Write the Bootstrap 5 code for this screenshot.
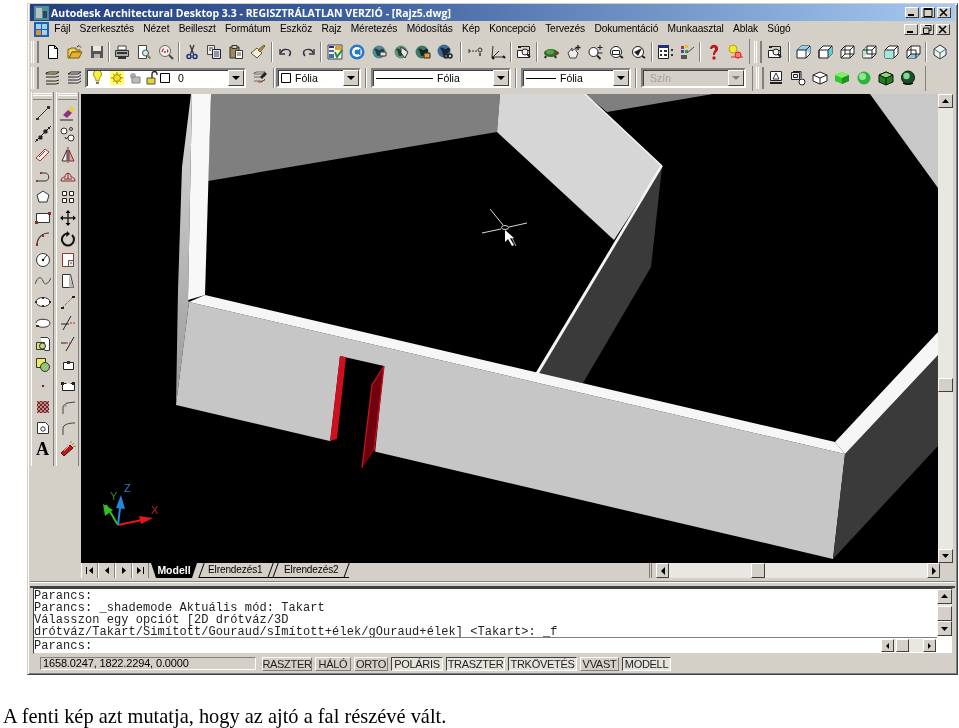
<!DOCTYPE html>
<html lang="hu">
<head>
<meta charset="utf-8">
<title>Autodesk Architectural Desktop</title>
<link href="https://cdn.jsdelivr.net/npm/bootstrap@5.3.0/dist/css/bootstrap.min.css" rel="stylesheet">
<style>
html,body{height:728px;overflow:hidden;background:#fff;margin:0}
body{font-family:"Liberation Sans",Arial,sans-serif;font-size:10px;color:#000;line-height:1}
.win{margin:3px 0 0 27px;width:931px;height:672px;background:#d4d0c8;border:1px solid;border-color:#d4d0c8 #404040 #404040 #d4d0c8;box-shadow:inset 1px 1px 0 #fff,inset -1px -1px 0 #808080;filter:blur(.3px)}
.ttl{height:17px;margin:0 2px 0 2px;background:linear-gradient(90deg,#24407f 0,#3d5f9f 35%,#a6caf0 100%);color:#fff;font:bold 10.5px "Open Sans","DejaVu Sans",sans-serif;padding-left:4px;gap:2px}
.wbtn{width:14px;height:11px;background:#d4d0c8;border:1px solid;border-color:#fff #404040 #404040 #fff;margin-left:1px}
.wbtn svg{display:block;margin:0 auto}
.wctl{margin-left:auto;padding-right:4px;gap:1px}
.mnu{height:17px;padding:0 3px 0 6px}
.mnu .mi{padding:0 4.65px;white-space:nowrap;letter-spacing:-.1px;font-size:10.2px}
.mnu .mi:first-of-type{padding-left:5.3px}
.tbrow{height:26px}
.tb1{height:27px}
.grip{width:7px;height:22px;flex:none;margin:0 2px 0 3px;border-left:3px double #fff;border-right:1px solid #808080;box-shadow:1px 0 0 #808080}
.grip.g1{margin-right:4px}
.grip.g2{margin:0 3px 0 4px}
.bt{width:22px;height:22px;flex:none}
.bt svg{display:block;width:16px;height:16px}
.sp{height:20px;width:0;border-left:1px solid #808080;border-right:1px solid #fff;flex:none}
.s3{margin:0 1px}.s5{margin:0 2px 0 1px}.s6{margin:0 2px}.s7{margin:0 1px 0 0}.s9{margin:0 3px 0 4px}
.endb{border-right:1px solid #808080;height:25px;width:3px;flex:none}
.cmb{height:20px;background:#fff;border:2px solid;border-color:#808080 #fff #fff #808080;box-shadow:inset 1px 1px 0 #404040;flex:none;padding-left:3px;font-size:10.5px}
.cmb.off{background:#d4d0c8;color:#a0a0a0}
.arw{margin-left:auto;width:16px;height:16px;background:#d4d0c8;border:1px solid;border-color:#fff #404040 #404040 #fff;flex:none}
.line-s{border-top:1px solid #000;flex:none}
.side{width:53px;flex:none;padding:1px 0 0 3px;gap:2px}
.scol{width:23px;border-left:1px solid #fff;border-right:1px solid #808080;height:374px}
.hgrip{height:7px;margin:1px 1px 2px;border-top:3px double #fff;border-bottom:1px solid #808080}
.sb{height:21px;width:100%}
.sb svg{width:16px;height:16px;display:block}
.view{height:472px}
.vp{width:857px;height:469px;display:block;background:#000;margin-top:3px}
.vsc{width:15px;height:469px;margin-top:3px;background:#e9e7e1}
.sbtn{background:#d4d0c8;border:1px solid;border-color:#fff #404040 #404040 #fff;flex:none}
.sbtn svg{display:block;margin:auto}
.sv{width:15px;height:14px}
.vth{height:14px;width:15px;margin-top:270px;margin-bottom:auto}
.tabs{height:17px;padding-left:53px}
.nv{width:17px;height:15px;flex:none;border-right:1px solid #808080;border-left:1px solid #fff}
.tb-a{width:46px;height:15px;background:#000;color:#fff;font-weight:bold;font-size:10.5px;clip-path:polygon(0 0,100% 0,calc(100% - 5px) 100%,5px 100%);flex:none;margin-left:2px}
.tb-n{height:15px;flex:none;position:relative;border-bottom:1px solid #000;font-size:10px;letter-spacing:-.1px}
.e1{width:74px;padding-left:9px;margin-left:2px}
.e2{width:76px;padding-left:11px}
.tb-n::after{content:"";position:absolute;right:2px;top:0;height:15px;border-right:1px solid #000;transform:skewX(-20deg)}
.tb-n::before{content:"";position:absolute;left:2px;top:0;height:15px;border-left:1px solid #000;transform:skewX(-20deg)}
.hsc{margin-left:auto;margin-right:17px;width:291px;gap:0;height:15px}
.hgr{width:7px;height:15px;border-left:3px double #808080;flex:none}
.hbt{width:13px;height:15px}
.htr{background:#e9e7e1;height:15px;flex-grow:1}
.hth{width:14px;height:15px;margin-left:82px}
.dsep{height:7px;margin:1px 2px 0;border-top:1px solid #808080;border-bottom:2px solid #404040;box-shadow:inset 0 1px 0 #fff}
.cmd{height:66px;margin:0 4px 0 5px;background:#fff;border:1px solid;border-color:#404040 #d4d0c8 #d4d0c8 #404040}
.cmtx{font:12px/12px "Liberation Mono","Courier New",monospace;white-space:pre;color:#222;letter-spacing:.07px}
.cml{height:49px;border-bottom:1px solid #808080;overflow:hidden;padding-top:1px}
.cl2{height:15px;padding-top:2px}
.cr{width:15px;background:#e9e7e1;height:47px;flex:none}
.cra{height:15px}
.chb{height:13px;width:55px;margin:1px 1px 0 auto;background:#e9e7e1;gap:2px}
.chb .sbtn{width:13px;height:13px}
.st{height:19px;padding:3px 0 0 12px}
.coo{width:216px;height:13px;border:1px solid;border-color:#808080 #fff #fff #808080;padding-left:2px;margin-right:6px;font-size:11px;letter-spacing:-.15px}
.sk{height:14px;flex:none;font-size:11px;border:1px solid;border-color:#fff #808080 #808080 #fff;margin-right:3px;letter-spacing:-.3px;color:#222}
.sk.dn{border-color:#404040 #fff #fff #404040;background:#e6e3dc}
.cap{font:20.4px/24px "Liberation Serif","Times New Roman",serif;margin:29px 0 0 3px;color:#000;white-space:nowrap;filter:blur(.25px)}
.cmb1{width:161px;margin-left:-1px}.cmb2{width:85px}.cmb3{width:140px}.cmb4{width:110px}.cmb5{width:105px}
.ln1{width:57px}.ln2{width:30px}
.fa-a{font:bold 18px/1 "Liberation Serif",serif}
.k1{width:50px}.k2{width:36px}.k3{width:34px}.k4{width:52px}.k5{width:59px}.k6{width:69px}.k7{width:39px}.k8{width:49px}
.flex-none{flex:none}
</style>
</head>
<body>
<div class="win d-flex flex-column">
  <div class="ttl d-flex align-items-center">
    <svg width="15" height="14" viewBox="0 0 15 14"><rect width="15" height="14" fill="#4f8f98"/><path d="M2 2h6v10H2z" fill="#b8c4c8"/><path d="M9 5h4v7H9z" fill="#28486a"/></svg>
    <span>Autodesk Architectural Desktop 3.3 - REGISZTRÁLATLAN VERZIÓ - [Rajz5.dwg]</span>
    <div class="wctl d-flex">
      <div class="wbtn"><svg width="12" height="9"><path d="M2 6h6v2H2z"/></svg></div>
      <div class="wbtn"><svg width="12" height="9"><path d="M2 .5h8v8H2z" fill="none" stroke="#000"/><path d="M2 1h8v1H2z"/></svg></div>
      <div class="wbtn"><svg width="12" height="9"><path d="M2 1l7 7M9 1L2 8" stroke="#000" stroke-width="1.5"/></svg></div>
    </div>
  </div>
  <div class="mnu d-flex align-items-center">
    <svg width="15" height="15" viewBox="0 0 15 15" class="flex-none"><rect width="15" height="15" fill="#1f5fb8"/><path d="M2 2h5v5H2zM8 2h5v5H8zM8 8h5v5H8z" fill="#9fd0f5"/><path d="M2 8h5v5H2z" fill="#e89020"/></svg>
    <span class="mi">Fájl</span><span class="mi">Szerkesztés</span><span class="mi">Nézet</span><span class="mi">Beilleszt</span><span class="mi">Formátum</span><span class="mi">Eszköz</span><span class="mi">Rajz</span><span class="mi">Méretezés</span><span class="mi">Módosítás</span><span class="mi">Kép</span><span class="mi">Koncepció</span><span class="mi">Tervezés</span><span class="mi">Dokumentáció</span><span class="mi">Munkaasztal</span><span class="mi">Ablak</span><span class="mi">Súgó</span>
    <div class="wctl d-flex">
      <div class="wbtn"><svg width="12" height="9"><path d="M2 6h6v2H2z"/></svg></div>
      <div class="wbtn"><svg width="12" height="9"><path d="M4 .5h6v5H8M2.500 3h5.500v5.500H2.500z" fill="none" stroke="#000"/></svg></div>
      <div class="wbtn"><svg width="12" height="9"><path d="M2 1l7 7M9 1L2 8" stroke="#000" stroke-width="1.500"/></svg></div>
    </div>
  </div>

  <div class="tbrow tb1 d-flex align-items-center">
    <div class="grip g1"></div>
    <div class="bt d-flex align-items-center justify-content-center"><svg viewBox="0 0 16 16"><path d="M3.500 1.500h6l3 3v10h-9z" fill="#fff" stroke="#000"/><path d="M9.500 1.500v3h3" fill="none" stroke="#000"/></svg></div>
    <div class="bt d-flex align-items-center justify-content-center"><svg viewBox="0 0 16 16"><path d="M1 14V5h2l1-1h5v2h4v2H5l-3 6z" fill="#f0d060" stroke="#806000"/><path d="M2 14l3-6h10l-3 6z" fill="#e8b030" stroke="#806000"/><path d="M10 3l2-1.500 2 2" fill="none" stroke="#333"/></svg></div>
    <div class="bt d-flex align-items-center justify-content-center"><svg viewBox="0 0 16 16"><path d="M2 2h12v12H2z" fill="#555"/><path d="M4 2h8v5H4z" fill="#e8e8e0"/><path d="M5 10h6v4H5z" fill="#b8b8b0"/></svg></div>
    <div class="sp s7"></div>
    <div class="bt d-flex align-items-center justify-content-center"><svg viewBox="0 0 16 16"><path d="M4 2h8v4H4z" fill="#fff" stroke="#444"/><path d="M1.500 6.500h13v6h-13z" fill="#aaa" stroke="#333"/><path d="M3 9h10M4 14h8" stroke="#333" stroke-width="2"/></svg></div>
    <div class="bt d-flex align-items-center justify-content-center"><svg viewBox="0 0 16 16"><path d="M2.500 1.500h8v13h-8z" fill="#fff" stroke="#444"/><circle cx="9.500" cy="9" r="3" fill="#cfe8f0" stroke="#355"/><path d="M11.500 11.500l3 3" stroke="#a07030" stroke-width="2"/></svg></div>
    <div class="bt d-flex align-items-center justify-content-center"><svg viewBox="0 0 16 16"><circle cx="7" cy="7" r="5.500" fill="#f5eeee" stroke="#666"/><path d="M4 8c1-3 1-3 2-3M6 8h2M9 6c1 0 1 2 0 2" fill="none" stroke="#b03030" stroke-width="1.300"/><path d="M11 11l4 4" stroke="#444" stroke-width="2"/></svg></div>
    <div class="sp s3"></div>
    <div class="bt d-flex align-items-center justify-content-center"><svg viewBox="0 0 16 16"><path d="M6 1l3.500 9M10 1L6.500 10" stroke="#333" stroke-width="1.300" fill="none"/><circle cx="5" cy="12.500" r="2" fill="none" stroke="#203080" stroke-width="1.500"/><circle cx="11" cy="12.500" r="2" fill="none" stroke="#203080" stroke-width="1.500"/></svg></div>
    <div class="bt d-flex align-items-center justify-content-center"><svg viewBox="0 0 16 16"><path d="M1.500 1.500h7v9h-7z" fill="#eee" stroke="#444"/><path d="M6.500 5.500h8v9h-8z" fill="#e0e4f0" stroke="#223"/><path d="M8 8h5M8 10h5M8 12h5M3 4h4M3 6h2" stroke="#445"/></svg></div>
    <div class="bt d-flex align-items-center justify-content-center"><svg viewBox="0 0 16 16"><path d="M2 3h9v11H2z" fill="#a08860" stroke="#332"/><path d="M4 1.500h5v3H4z" fill="#ccc" stroke="#333"/><path d="M7.500 6.500h7v8h-7z" fill="#fff" stroke="#333"/><path d="M9 9h4M9 11h4" stroke="#555"/></svg></div>
    <div class="bt d-flex align-items-center justify-content-center"><svg viewBox="0 0 16 16"><path d="M1 9l6-5 5 5-5 5z" fill="#f4f0d0" stroke="#555"/><path d="M8 6l6-5 1 1-5 6z" fill="#c89820" stroke="#654"/></svg></div>
    <div class="sp s6"></div>
    <div class="bt d-flex align-items-center justify-content-center"><svg viewBox="0 0 16 16"><path d="M3 9a5 4 0 0 1 9-2c1 2 0 4-1 5" fill="none" stroke="#334" stroke-width="1.400"/><path d="M2 5v5h5" fill="none" stroke="#334" stroke-width="1.400"/></svg></div>
    <div class="bt d-flex align-items-center justify-content-center"><svg viewBox="0 0 16 16"><path d="M13 9a5 4 0 0 0-9-2c-1 2 0 4 1 5" fill="none" stroke="#334" stroke-width="1.400"/><path d="M14 5v5H9" fill="none" stroke="#334" stroke-width="1.400"/></svg></div>
    <div class="sp s5"></div>
    <div class="bt d-flex align-items-center justify-content-center"><svg viewBox="0 0 16 16"><path d="M1 1h14v14H1z" fill="#f4f4f4" stroke="#444"/><path d="M2 2h5v2H2z" fill="#203090"/><path d="M2 6h5v2H2zM2 10h5v4H2z" fill="#4070b0"/><path d="M8 2h6v4H8z" fill="#e8a020"/><path d="M8 8l2 5 5-7" fill="none" stroke="#209030" stroke-width="2"/></svg></div>
    <div class="bt d-flex align-items-center justify-content-center"><svg viewBox="0 0 16 16"><circle cx="8" cy="8" r="7.500" fill="#2878c8"/><circle cx="8" cy="8" r="5" fill="#fff"/><circle cx="8" cy="8" r="2.500" fill="#2878c8"/><path d="M10 5h1.500v6H10z" fill="#2878c8"/></svg></div>
    <div class="bt d-flex align-items-center justify-content-center"><svg viewBox="0 0 16 16"><circle cx="8" cy="8" r="6.500" fill="#508890"/><path d="M3 5c3-2 4 2 6 1s3-2 4 0-4 6-6 6-1-4-4-7z" fill="#1f3f4f"/><path d="M9 8h6v4H9z" fill="#e0e0e0" stroke="#333"/></svg></div>
    <div class="bt d-flex align-items-center justify-content-center"><svg viewBox="0 0 16 16"><circle cx="8" cy="8" r="6.500" fill="#609078"/><path d="M3 5c3-2 4 2 6 1s3-2 4 0-4 6-6 6-1-4-4-7z" fill="#204030"/><path d="M8 3l7 5-3 6-4-5z" fill="#e8e8e8" stroke="#333"/></svg></div>
    <div class="bt d-flex align-items-center justify-content-center"><svg viewBox="0 0 16 16"><circle cx="7" cy="8" r="6.500" fill="#407868"/><path d="M3 5c3-2 4 2 6 1s3-2 4 0-4 6-6 6-1-4-4-7z" fill="#142820"/><path d="M9 9h6v5H9z" fill="#d8a040" stroke="#322"/></svg></div>
    <div class="bt d-flex align-items-center justify-content-center"><svg viewBox="0 0 16 16"><circle cx="7" cy="7" r="6.500" fill="#406898"/><path d="M3 4c3-2 4 2 6 1s3-2 4 0-4 6-6 6-1-4-4-7z" fill="#182838"/><circle cx="9" cy="12" r="2" fill="none" stroke="#222" stroke-width="1.500"/><circle cx="13" cy="12" r="2" fill="none" stroke="#222" stroke-width="1.500"/></svg></div>
    <div class="sp s9"></div>
    <div class="bt d-flex align-items-center justify-content-center"><svg viewBox="0 0 16 16"><path d="M1 7h9" stroke="#333" stroke-dasharray="2 1"/><path d="M1 5v4" stroke="#333"/><circle cx="12" cy="6" r="2" fill="none" stroke="#333"/><path d="M12 9v3" stroke="#333" stroke-width="1.500"/></svg></div>
    <div class="bt d-flex align-items-center justify-content-center"><svg viewBox="0 0 16 16"><path d="M3 2l-1 11h11" fill="none" stroke="#333"/><path d="M3 13l6-6" stroke="#333"/><path d="M13 12l2 2M2 13l2 2" stroke="#111" stroke-width="2"/></svg></div>
    <div class="sp s3"></div>
    <div class="bt d-flex align-items-center justify-content-center"><svg viewBox="0 0 16 16"><path d="M1.500 6.500h12v7h-12z" fill="#fff" stroke="#222"/><path d="M4.500 2.500h9v7" fill="none" stroke="#222"/><circle cx="9" cy="8" r="3" fill="#eee" stroke="#222"/><path d="M11 10l3 3" stroke="#222" stroke-width="2"/><path d="M2 3h3" stroke="#222" stroke-width="2"/></svg></div>
    <div class="sp s5"></div>
    <div class="bt d-flex align-items-center justify-content-center"><svg viewBox="0 0 16 16"><ellipse cx="8" cy="9" rx="7" ry="4" fill="#2d6a2d"/><ellipse cx="7" cy="8" rx="4" ry="2.500" fill="#5aa040"/><circle cx="14.500" cy="9" r="1.500" fill="#a02020"/><path d="M3 12l-1 2M12 12l1 2" stroke="#222" stroke-width="2"/></svg></div>
    <div class="bt d-flex align-items-center justify-content-center"><svg viewBox="0 0 16 16"><path d="M3 9l4-5v3l4-3v3l2 2-2 5H5z" fill="#eee" stroke="#444"/><path d="M13 1v5M10.500 3.500h5" stroke="#222" stroke-width="1.300"/></svg></div>
    <div class="bt d-flex align-items-center justify-content-center"><svg viewBox="0 0 16 16"><circle cx="6.500" cy="8" r="4.500" fill="#fff" stroke="#222"/><path d="M10 11.500l3.500 3.500" stroke="#222" stroke-width="1.800"/><path d="M13 1v5M10.500 3.500h5M10.500 9h5" stroke="#222"/></svg></div>
    <div class="bt d-flex align-items-center justify-content-center"><svg viewBox="0 0 16 16"><circle cx="7" cy="8" r="5.500" fill="#fff" stroke="#222"/><path d="M3.500 6.500h7v4h-7z" fill="none" stroke="#222"/><path d="M11 12l3 2" stroke="#222" stroke-width="2"/></svg></div>
    <div class="bt d-flex align-items-center justify-content-center"><svg viewBox="0 0 16 16"><circle cx="7" cy="8" r="5.500" fill="#fff" stroke="#222"/><path d="M3 8l8-4-4 8z" fill="#222"/><path d="M11 12l3 2" stroke="#222" stroke-width="2"/></svg></div>
    <div class="sp s3"></div>
    <div class="bt d-flex align-items-center justify-content-center"><svg viewBox="0 0 16 16"><path d="M1.500 1.500h10v13h-10z" fill="#fff" stroke="#222"/><path d="M1 1h11v3H1z" fill="#203080"/><path d="M3 6h2v2H3zM7 6h3v2H7zM3 10h2v2H3zM7 10h3v2H7z" fill="#333"/><path d="M14 5h2v2h-2zM14 10h2v2h-2z" fill="#333"/></svg></div>
    <div class="bt d-flex align-items-center justify-content-center"><svg viewBox="0 0 16 16"><path d="M2 2h3v3H2z" fill="#c03030"/><path d="M6 1h3v3H6z" fill="#e8c020"/><path d="M2 6h3v3H2z" fill="#3050b0"/><path d="M6 6h3v3H6z" fill="#30a040"/><path d="M2 11h6v4H2z" fill="#555"/><path d="M8 9l7-6" stroke="#444"/></svg></div>
    <div class="sp s5"></div>
    <div class="bt d-flex align-items-center justify-content-center"><svg viewBox="0 0 16 16"><path d="M4 5c0-6 9-5 8 0 0 3-3 3-3 6H7c0-4 2-4 2-6s-3-1-3 0z" fill="#c01818"/><circle cx="8" cy="14" r="1.700" fill="#c01818"/></svg></div>
    <div class="bt d-flex align-items-center justify-content-center"><svg viewBox="0 0 16 16"><circle cx="5" cy="5" r="4" fill="#f5e830" stroke="#c0a000"/><path d="M3 13h12M10 8v7" stroke="#e81818"/><circle cx="10" cy="11" r="3" fill="#f08080" stroke="#e81818"/></svg></div>
    <div class="endb"></div>
    <div class="grip g2"></div>
    <div class="bt d-flex align-items-center justify-content-center"><svg viewBox="0 0 16 16"><path d="M1.500 6.500h12v7h-12z" fill="#fff" stroke="#222"/><path d="M4.500 2.500h9v7" fill="none" stroke="#222"/><circle cx="9" cy="8" r="3" fill="#eee" stroke="#222"/><path d="M11 10l3 3" stroke="#222" stroke-width="2"/><path d="M2 3h3" stroke="#222" stroke-width="2"/></svg></div>
    <div class="sp s6"></div>
    <div class="bt d-flex align-items-center justify-content-center"><svg viewBox="0 0 16 16"><path d="M2 6l4-4h9v8l-4 4H2z" fill="#fff" stroke="#222"/><path d="M6 2h9v8l-4-4H2z" fill="#8fd0f0"/><path d="M2 6h9v8M11 6l4-4" fill="none" stroke="#222"/></svg></div>
    <div class="bt d-flex align-items-center justify-content-center"><svg viewBox="0 0 16 16"><path d="M2 6l4-4h9v8l-4 4H2z" fill="#fff" stroke="#222"/><path d="M11 6v8l4-4V2z" fill="#60d0d8"/><path d="M2 14V6h9l4-4M11 6v8" fill="none" stroke="#222"/></svg></div>
    <div class="bt d-flex align-items-center justify-content-center"><svg viewBox="0 0 16 16"><path d="M2 6l4-4h9v8l-4 4H2z" fill="#fff" stroke="#222"/><path d="M2 6h9v8M11 6l4-4M6 2v8h9" fill="none" stroke="#222"/><path d="M2 14l4-4" stroke="#222"/></svg></div>
    <div class="bt d-flex align-items-center justify-content-center"><svg viewBox="0 0 16 16"><path d="M2 6l4-4h9v8l-4 4H2z" fill="#fff" stroke="#222"/><path d="M6 2l-4 4v8l4-4z" fill="#b8e8d0"/><path d="M2 6h9v8M11 6l4-4M6 2v8h9" fill="none" stroke="#222"/></svg></div>
    <div class="bt d-flex align-items-center justify-content-center"><svg viewBox="0 0 16 16"><path d="M2 6l4-4h9v8l-4 4H2z" fill="#fff" stroke="#222"/><path d="M2 6h9v8H2z" fill="#a0e8e0"/><path d="M2 6h9l4-4M11 6v8" fill="none" stroke="#222"/></svg></div>
    <div class="bt d-flex align-items-center justify-content-center"><svg viewBox="0 0 16 16"><path d="M2 6l4-4h9v8l-4 4H2z" fill="#fff" stroke="#222"/><path d="M6 10h9l-4 4H2z" fill="#8ec8e8"/><path d="M6 2v8h9M2 14l4-4M2 6h9v8" fill="none" stroke="#222"/></svg></div>
    <div class="sp s5"></div>
    <div class="bt d-flex align-items-center justify-content-center"><svg viewBox="0 0 16 16"><path d="M8 1l6 4v6l-6 4-6-4V5z" fill="#e8f4ec" stroke="#334"/><path d="M2 5l6 4 6-4M8 9v6" fill="none" stroke="#467"/></svg></div>
  </div>

  <div class="tbrow d-flex align-items-center">
    <div class="grip g1"></div>
    <div class="bt d-flex align-items-center justify-content-center"><svg viewBox="0 0 16 16"><path d="M1 3l3-1h10l-3 2H1zM1 7h10l3-1M1 11h10l3-1M1 14h10l3-1" fill="#f8f0a0" stroke="#222"/></svg></div>
    <div class="bt d-flex align-items-center justify-content-center"><svg viewBox="0 0 16 16"><path d="M1 4l3-2h10l-3 2zM1 7h10l3-2M1 10h10l3-2M1 13h10l3-2" fill="#eee" stroke="#222"/></svg></div>
    <div class="cmb d-flex align-items-center cmb1"><svg width="16" height="14" viewBox="0 0 16 14"><path d="M4 5a4 4 0 1 1 7 0c-1 2-2 2-2 5H6c0-3-1-3-2-5z" fill="#f8f040" stroke="#a09000"/><path d="M6 11h3v2H6z" fill="#777"/></svg><svg class="ms-1" width="14" height="14" viewBox="0 0 14 14"><rect width="14" height="14" fill="#ffff70"/><circle cx="7" cy="7" r="3.500" fill="#f8e020" stroke="#a08000"/><path d="M7 1v2M7 11v2M1 7h2M11 7h2M3 3l1 1M10 10l1 1M3 11l1-1M10 4l1-1" stroke="#a08000"/></svg><svg class="ms-1" width="14" height="14" viewBox="0 0 14 14"><circle cx="5" cy="5" r="3" fill="#aaa"/><path d="M4 6h8v6H4z" fill="#bbb" stroke="#888"/></svg><svg class="ms-1" width="14" height="14" viewBox="0 0 14 14"><path d="M1 7h8v6H1z" fill="#e8d040" stroke="#553"/><path d="M6 7V3a2.500 2.500 0 0 1 5 0v1" fill="none" stroke="#222" stroke-width="1.300"/></svg><svg width="10" height="10" viewBox="0 0 10 10"><path d="M.5.500h9v9h-9z" fill="#fff" stroke="#000"/></svg><span class="ms-2">0</span><div class="arw d-flex align-items-center justify-content-center"><svg width="8" height="5"><path d="M0 0h8L4 4z"/></svg></div></div>
    <div class="bt d-flex align-items-center justify-content-center ms-1"><svg viewBox="0 0 16 16"><path d="M1 3l3-1h8l-3 2H1zM1 7h8l3-1M1 11h8l3-1" fill="#e8e8e8" stroke="#666"/><path d="M7 7l5-5 2 2-5 5z" fill="#222"/><path d="M5 12h4l3-3" stroke="#a03030" fill="none"/></svg></div>
    <div class="sp s3"></div>
    <div class="cmb d-flex align-items-center cmb2"><svg width="10" height="10" viewBox="0 0 10 10"><path d="M.5.500h9v9h-9z" fill="#fff" stroke="#000"/></svg><span class="ms-1">Fólia</span><div class="arw d-flex align-items-center justify-content-center"><svg width="8" height="5"><path d="M0 0h8L4 4z"/></svg></div></div>
    <div class="sp ms-1"></div>
    <div class="cmb d-flex align-items-center cmb3 ms-1"><div class="line-s ln1"></div><span class="ms-1">Fólia</span><div class="arw d-flex align-items-center justify-content-center"><svg width="8" height="5"><path d="M0 0h8L4 4z"/></svg></div></div>
    <div class="sp ms-1"></div>
    <div class="cmb d-flex align-items-center cmb4 ms-1"><div class="line-s ln2"></div><span class="ms-1">Fólia</span><div class="arw d-flex align-items-center justify-content-center"><svg width="8" height="5"><path d="M0 0h8L4 4z"/></svg></div></div>
    <div class="sp ms-1"></div>
    <div class="cmb off d-flex align-items-center cmb5 ms-1"><span class="ms-1">Szín</span><div class="arw d-flex align-items-center justify-content-center"><svg width="8" height="5"><path d="M0 0h8L4 4z" fill="#808080"/></svg></div></div>
    <div class="endb ms-1"></div>
    <div class="grip"></div>
    <div class="bt d-flex align-items-center justify-content-center"><svg viewBox="0 0 16 16"><path d="M2.500 1.500h11v9h-11z" fill="#fff" stroke="#222"/><path d="M8 3l3 6H5z" fill="none" stroke="#333"/><path d="M2 13h12" stroke="#222" stroke-width="2"/></svg></div>
    <div class="bt d-flex align-items-center justify-content-center"><svg viewBox="0 0 16 16"><path d="M1.500 2.500h8v7h-8z" fill="#eee" stroke="#222"/><path d="M3 1.500h8v7" fill="none" stroke="#222"/><path d="M3.500 4.500h4v3h-4z" fill="none" stroke="#222"/><circle cx="12" cy="12" r="3" fill="#fff" stroke="#222"/></svg></div>
    <div class="bt d-flex align-items-center justify-content-center"><svg viewBox="0 0 16 16"><path d="M8 2l7 3v6l-7 3-7-3V5z" fill="#fff" stroke="#222"/><path d="M1 5l7 3 7-3M8 8v6" fill="none" stroke="#222"/></svg></div>
    <div class="bt d-flex align-items-center justify-content-center"><svg viewBox="0 0 16 16"><path d="M8 2l7 3v6l-7 3-7-3V5z" fill="#30c830"/><path d="M1 5l7 3 7-3-7-3z" fill="#80f060"/><path d="M8 8v6l7-3V5z" fill="#209020"/></svg></div>
    <div class="bt d-flex align-items-center justify-content-center"><svg viewBox="0 0 16 16"><circle cx="8" cy="8" r="6.500" fill="#30b040"/><circle cx="6.500" cy="6.500" r="3.500" fill="#90e890"/></svg></div>
    <div class="bt d-flex align-items-center justify-content-center"><svg viewBox="0 0 16 16"><path d="M8 2l7 3v7l-7 3-7-3V5z" fill="#208020" stroke="#111"/><path d="M1 5l7 3 7-3-7-3z" fill="#90d870" stroke="#111"/><path d="M8 8v7" stroke="#111"/></svg></div>
    <div class="bt d-flex align-items-center justify-content-center"><svg viewBox="0 0 16 16"><circle cx="8" cy="7.500" r="6.500" fill="#185028" stroke="#111"/><circle cx="6.500" cy="6" r="3.200" fill="#80d890"/><path d="M3 13c3 1.500 7 1.500 10 0" stroke="#111" stroke-width="1.500" fill="none"/></svg></div>
    <div class="endb ms-1"></div>
  </div>

  <div class="view d-flex">
    <div class="side d-flex">
      <div class="scol d-flex flex-column">
        <div class="hgrip"></div>
        <div class="sb d-flex align-items-center justify-content-center"><svg viewBox="0 0 16 16"><path d="M2 14L14 2" stroke="#333"/><path d="M1 13h3v2H1zM12 1h3v3h-3z" fill="#333"/></svg></div>
        <div class="sb d-flex align-items-center justify-content-center"><svg viewBox="0 0 16 16"><path d="M0 16L16 0" stroke="#222"/><path d="M4 10h3v3H4zM9 4h3v3H9zM1 13l2 2M13 1l2 2" stroke="#222" fill="#222"/></svg></div>
        <div class="sb d-flex align-items-center justify-content-center"><svg viewBox="0 0 16 16"><path d="M1 11l9-9 4 3-9 9z" fill="#f0ece4" stroke="#a03838"/><path d="M4 10l6-6" stroke="#a03838"/></svg></div>
        <div class="sb d-flex align-items-center justify-content-center"><svg viewBox="0 0 16 16"><path d="M1 13h9c5 0 5-8 0-8H6" fill="none" stroke="#333"/><path d="M1 12h2v2H1zM5 4h2v2H5z" fill="#a03030"/></svg></div>
        <div class="sb d-flex align-items-center justify-content-center"><svg viewBox="0 0 16 16"><path d="M8 2l6 4-2 7H4L2 6z" fill="#fff" stroke="#333"/></svg></div>
        <div class="sb d-flex align-items-center justify-content-center"><svg viewBox="0 0 16 16"><path d="M1.500 3.500h13v9h-13z" fill="#fff" stroke="#333"/><path d="M13 2h3v3h-3zM0 11h3v3H0z" fill="#803030"/></svg></div>
        <div class="sb d-flex align-items-center justify-content-center"><svg viewBox="0 0 16 16"><path d="M2 14c0-7 5-12 12-12" fill="none" stroke="#333" stroke-width="1.200"/><path d="M1 12h2v3H1z" fill="#b02020"/><path d="M7 4h2v2H7z" fill="#b02020"/></svg></div>
        <div class="sb d-flex align-items-center justify-content-center"><svg viewBox="0 0 16 16"><circle cx="8" cy="8" r="6.500" fill="#fff" stroke="#333"/><path d="M8 8l4-5" stroke="#333"/><circle cx="8" cy="8" r="1.200"/></svg></div>
        <div class="sb d-flex align-items-center justify-content-center"><svg viewBox="0 0 16 16"><path d="M0 11c3-8 6-8 8-3s5 3 8-3" fill="none" stroke="#444"/></svg></div>
        <div class="sb d-flex align-items-center justify-content-center"><svg viewBox="0 0 16 16"><ellipse cx="8" cy="8" rx="7" ry="4.500" fill="#fff" stroke="#333"/><path d="M7 3h2v2H7zM7 11h2v2H7zM0 7h2v2H0zM14 7h2v2h-2z" fill="#333"/></svg></div>
        <div class="sb d-flex align-items-center justify-content-center"><svg viewBox="0 0 16 16"><path d="M1 8c0-5 14-5 14 0s-10 5-12 3" fill="#fff" stroke="#333"/><path d="M1 10h3v2H1z" fill="#333"/></svg></div>
        <div class="sb d-flex align-items-center justify-content-center"><svg viewBox="0 0 16 16"><path d="M5.500 1.500h7l2 2v11h-5" fill="#fff" stroke="#333"/><path d="M1.500 6.500h8v7h-8z" fill="#e8e060" stroke="#333"/><circle cx="7.500" cy="10" r="3" fill="#b8d890" stroke="#333"/></svg></div>
        <div class="sb d-flex align-items-center justify-content-center"><svg viewBox="0 0 16 16"><path d="M1.500 1.500h9v9h-9z" fill="#f0e860" stroke="#333"/><circle cx="10" cy="10" r="4.500" fill="#90c870" stroke="#333"/></svg></div>
        <div class="sb d-flex align-items-center justify-content-center"><svg viewBox="0 0 16 16"><path d="M7 7h2v2H7z" fill="#702020"/></svg></div>
        <div class="sb d-flex align-items-center justify-content-center"><svg viewBox="0 0 16 16"><path d="M2 2h12v12H2z" fill="#c88888"/><path d="M2 6l4-4M2 10l8-8M2 14L14 2M6 14l8-8M10 14l4-4M2 10l4 4M2 6l8 8M2 2l12 12M6 2l8 8M10 2l4 4" stroke="#702828"/></svg></div>
        <div class="sb d-flex align-items-center justify-content-center"><svg viewBox="0 0 16 16"><path d="M2.500 2.500h8l3 3v8h-11z" fill="#fff" stroke="#333"/><circle cx="8" cy="9" r="2.200" fill="none" stroke="#333"/></svg></div>
        <div class="sb d-flex align-items-center justify-content-center"><span class="fa-a">A</span></div>
      </div>
      <div class="scol d-flex flex-column">
        <div class="hgrip"></div>
        <div class="sb d-flex align-items-center justify-content-center"><svg viewBox="0 0 16 16"><path d="M11 1l4 3-3 4-4-3z" fill="#d8d840"/><path d="M8 5l4 3-5 5-4-3z" fill="#903080"/><path d="M0 15h13" stroke="#222"/></svg></div>
        <div class="sb d-flex align-items-center justify-content-center"><svg viewBox="0 0 16 16"><circle cx="4" cy="5" r="3" fill="#fff" stroke="#333"/><circle cx="11" cy="12" r="3" fill="#fff" stroke="#333"/><circle cx="11" cy="3" r="1.500" fill="none" stroke="#333"/><path d="M5 11l1 2 2-2" stroke="#333" fill="none"/></svg></div>
        <div class="sb d-flex align-items-center justify-content-center"><svg viewBox="0 0 16 16"><path d="M7 3L2 14h5z" fill="#eee" stroke="#333"/><path d="M9 3l5 11H9z" fill="#d8a8a8" stroke="#803030"/><path d="M8 0v16" stroke="#803030"/></svg></div>
        <div class="sb d-flex align-items-center justify-content-center"><svg viewBox="0 0 16 16"><path d="M1 13c0-3 2-4 4-4 0-5 6-5 6 0 2 0 4 1 4 4z" fill="#e8c8c0" stroke="#803030"/><path d="M4 11h8M8 5v6" stroke="#803030"/></svg></div>
        <div class="sb d-flex align-items-center justify-content-center"><svg viewBox="0 0 16 16"><path d="M2.500 2.500h4v4h-4zM9.500 2.500h4v4h-4zM2.500 9.500h4v4h-4zM9.500 9.500h4v4h-4z" fill="#fff" stroke="#222"/></svg></div>
        <div class="sb d-flex align-items-center justify-content-center"><svg viewBox="0 0 16 16"><path d="M8 1v14M1 8h14" stroke="#222" stroke-width="1.400"/><path d="M8 0l2.500 3h-5zM8 16l-2.500-3h5zM0 8l3-2.500v5zM16 8l-3-2.500v5z"/></svg></div>
        <div class="sb d-flex align-items-center justify-content-center"><svg viewBox="0 0 16 16"><path d="M12 4a6 6 0 1 1-5-1.500" fill="none" stroke="#111" stroke-width="2"/><path d="M7 0l-1 6 4-3z" fill="#111"/></svg></div>
        <div class="sb d-flex align-items-center justify-content-center"><svg viewBox="0 0 16 16"><path d="M2.500 1.500h11v13h-11z" fill="#fff" stroke="#a03030"/><path d="M8.500 8.500h5v6h-5z" fill="#e8e8e8" stroke="#555"/><path d="M10 11h2" stroke="#555"/></svg></div>
        <div class="sb d-flex align-items-center justify-content-center"><svg viewBox="0 0 16 16"><path d="M2.500 1.500h8l3 13h-11z" fill="#fff" stroke="#333"/><path d="M9 1.500l4.500 13H9z" fill="#c0b8b8"/></svg></div>
        <div class="sb d-flex align-items-center justify-content-center"><svg viewBox="0 0 16 16"><path d="M2 14L14 2" stroke="#a06060" stroke-dasharray="3 1"/><path d="M1 13h3v2H1zM12 2h3v2h-3z" fill="#222"/></svg></div>
        <div class="sb d-flex align-items-center justify-content-center"><svg viewBox="0 0 16 16"><path d="M3 15l8-14" stroke="#222"/><path d="M1 9h8" stroke="#222"/><path d="M10 8h5" stroke="#a03030" stroke-dasharray="2 1"/></svg></div>
        <div class="sb d-flex align-items-center justify-content-center"><svg viewBox="0 0 16 16"><path d="M6 15l8-14" stroke="#222"/><path d="M1 7h5" stroke="#222"/><path d="M6 7h5" stroke="#a03030" stroke-dasharray="2 1"/></svg></div>
        <div class="sb d-flex align-items-center justify-content-center"><svg viewBox="0 0 16 16"><path d="M3.500 5.500h10v7h-10z" fill="#fff" stroke="#222"/><path d="M7 4h3v3H7z" fill="#333"/></svg></div>
        <div class="sb d-flex align-items-center justify-content-center"><svg viewBox="0 0 16 16"><path d="M2.500 5.500h4m4 0h4v7h-12v-7" fill="#fff" stroke="#222"/><path d="M1 4h3v3H1zM12 4h3v3h-3z" fill="#222"/></svg></div>
        <div class="sb d-flex align-items-center justify-content-center"><svg viewBox="0 0 16 16"><path d="M3 15V7l4-3 8-1" fill="none" stroke="#444"/><path d="M3 7h4" stroke="#888"/></svg></div>
        <div class="sb d-flex align-items-center justify-content-center"><svg viewBox="0 0 16 16"><path d="M3 15V9c0-4 4-6 12-6" fill="none" stroke="#444"/><path d="M5 5l-2 2" stroke="#222" stroke-dasharray="1 1"/></svg></div>
        <div class="sb d-flex align-items-center justify-content-center"><svg viewBox="0 0 16 16"><path d="M1 12l9-8 3 3-9 8z" fill="#b81818" stroke="#601010"/><path d="M4 10l5-5" stroke="#f0a0a0"/><path d="M12 4l2-2M13 6l3-1M11 2l0-2" stroke="#c08020"/></svg></div>
      </div>
    </div>
    <svg class="vp flex-none" viewBox="81 94 857 469" xmlns="http://www.w3.org/2000/svg">
      <defs><linearGradient id="lw" x1="0" y1="0" x2="0" y2="1"><stop offset="0" stop-color="#d8d8d8"/><stop offset="1" stop-color="#9a9a9a"/></linearGradient></defs>
      <polygon points="585,94 713,94 607,112" fill="#7f7f7f"/>
      <polygon points="211,94 500,94 497,132 208,181" fill="#7f7f7f"/>
      <polygon points="500,94 585,94 662,166 614,240 497,132" fill="#d6d6d6"/>
      <polyline points="585,94 662,166" fill="none" stroke="#f4f4f4" stroke-width="1.500"/>
      <polygon points="662,167 651,267 583,383 538,374" fill="#3a3a3a"/>
      <polygon points="660,166 663,166 538,375 535,374" fill="#f4f4f4"/>
      <polygon points="870,94 938,94 938,188" fill="#c8c8c8"/>
      <polygon points="191,94 192,94 188,300 189,302 176,405 178,290 182,167" fill="url(#lw)"/>
      <polygon points="192,94 211,94 205,295 188,300" fill="#f8f8f8"/>
      <polygon points="189,302 845,454 833,559 176,405" fill="#c6c6c6"/>
      <polygon points="205,295 835,442 845,454 189,302" fill="#f6f6f6"/>
      <polygon points="845,454 938,355 938,446 833,559" fill="#3a3a3a"/>
      <polygon points="835,442 938,332 938,355 845,454" fill="#f6f6f6"/>
      <polygon points="340,356 384,366 375,453 330,443" fill="#000"/>
      <polygon points="340,356 346,357 337,439 330,441" fill="#cc1020"/>
      <polygon points="384,366 372,385 362,468 374,451" fill="#70000e"/>
      <polyline points="384,366 372,385 362,468" fill="none" stroke="#c81020" stroke-width="1.300"/>
      <polyline points="384,366 374,451" fill="none" stroke="#c81020" stroke-width="1.300"/>
      <g stroke="#d8d8d8" fill="none" stroke-width="1">
        <path d="M482 233l19-4M509 227l18-4M490 209l13 16"/>
        <ellipse cx="505" cy="227.500" rx="3.500" ry="2"/>
      </g>
      <path d="M505 230v12l3-3 4 7 2-1-4-6.500 4-.5z" fill="#fff"/>
      <path d="M512 238l4 8" stroke="#aaa"/>
      <g>
        <path d="M118 525l29-6" stroke="#e01818" stroke-width="2"/><path d="M139 516l14 2-12 6z" fill="#e01818"/>
        <path d="M118 525l-12-20" stroke="#30c020" stroke-width="2"/><path d="M103 504l10 6-8 6z" fill="#30c020"/>
        <path d="M118 525l3-25" stroke="#2088e0" stroke-width="2"/><path d="M121 495l4 14-9-1z" fill="#2088e0"/>
        <text x="151" y="514" fill="#b02828" font-family="Liberation Sans,sans-serif" font-size="11">X</text>
        <text x="110" y="500" fill="#2c8c20" font-family="Liberation Sans,sans-serif" font-size="11">Y</text>
        <text x="124" y="492" fill="#3878c0" font-family="Liberation Sans,sans-serif" font-size="11">Z</text>
      </g>
    </svg>
    <div class="vsc d-flex flex-column">
      <div class="sbtn sv"><svg width="13" height="12"><path d="M3 8h7L6.500 4z"/></svg></div>
      <div class="sbtn vth"></div>
      <div class="sbtn sv"><svg width="13" height="12"><path d="M3 4h7L6.500 8z"/></svg></div>
    </div>
  </div>

  <div class="tabs d-flex align-items-start">
    <div class="nv d-flex align-items-center justify-content-center"><svg width="9" height="9"><path d="M1 1h1v7H1zM8 1v7L4 4.500z"/></svg></div>
    <div class="nv d-flex align-items-center justify-content-center"><svg width="9" height="9"><path d="M7 1v7L3 4.500z"/></svg></div>
    <div class="nv d-flex align-items-center justify-content-center"><svg width="9" height="9"><path d="M3 1v7l4-3.500z"/></svg></div>
    <div class="nv d-flex align-items-center justify-content-center"><svg width="9" height="9"><path d="M1 1v7l4-3.500zM7 1h1v7H7z"/></svg></div>
    <div class="tb-a d-flex align-items-center justify-content-center">Modell</div>
    <div class="tb-n e1 d-flex align-items-center">Elrendezés1</div>
    <div class="tb-n e2 d-flex align-items-center">Elrendezés2</div>
    <div class="hsc d-flex">
      <div class="hgr"></div>
      <div class="sbtn hbt d-flex align-items-center justify-content-center"><svg width="6" height="8"><path d="M5 0v8L1 4z"/></svg></div>
      <div class="htr"><div class="sbtn hth"></div></div>
      <div class="sbtn hbt d-flex align-items-center justify-content-center"><svg width="6" height="8"><path d="M1 0v8l4-4z"/></svg></div>
    </div>
  </div>
  <div class="dsep"></div>
  <div class="cmd d-flex">
    <div class="flex-grow-1 d-flex flex-column overflow-hidden">
      <div class="cmtx cml">Parancs:
Parancs: _shademode Aktuális mód: Takart
Válasszon egy opciót [2D drótváz/3D
drótváz/Takart/Simított/Gouraud/sImított+élek/gOuraud+élek] &lt;Takart&gt;: _f</div>
      <div class="d-flex">
        <div class="cmtx cl2">Parancs:</div>
        <div class="chb d-flex">
          <div class="sbtn d-flex align-items-center justify-content-center"><svg width="4" height="6"><path d="M3 0v6L0 3z"/></svg></div>
          <div class="sbtn"></div>
          <div class="sbtn ms-auto d-flex align-items-center justify-content-center"><svg width="4" height="6"><path d="M0 0v6l3-3z"/></svg></div>
        </div>
      </div>
    </div>
    <div class="cr d-flex flex-column">
      <div class="sbtn cra"><svg width="13" height="13"><path d="M3 8h7L6.500 4z"/></svg></div>
      <div class="sbtn cra mt-auto"></div>
      <div class="sbtn cra"><svg width="13" height="13"><path d="M3 5h7L6.500 9z"/></svg></div>
    </div>
  </div>
  <div class="st d-flex align-items-start">
    <div class="coo d-flex align-items-center">1658.0247, 1822.2294, 0.0000</div>
    <div class="sk k1 d-flex align-items-center justify-content-center">RASZTER</div>
    <div class="sk k2 d-flex align-items-center justify-content-center">HÁLÓ</div>
    <div class="sk k3 d-flex align-items-center justify-content-center">ORTO</div>
    <div class="sk dn k4 d-flex align-items-center justify-content-center">POLÁRIS</div>
    <div class="sk dn k5 d-flex align-items-center justify-content-center">TRASZTER</div>
    <div class="sk dn k6 d-flex align-items-center justify-content-center">TRKÖVETÉS</div>
    <div class="sk k7 d-flex align-items-center justify-content-center">VVAST</div>
    <div class="sk dn k8 d-flex align-items-center justify-content-center">MODELL</div>
  </div>
</div>
<p class="cap">A fenti kép azt mutatja, hogy az ajtó a fal részévé vált.</p>
</body>
</html>
